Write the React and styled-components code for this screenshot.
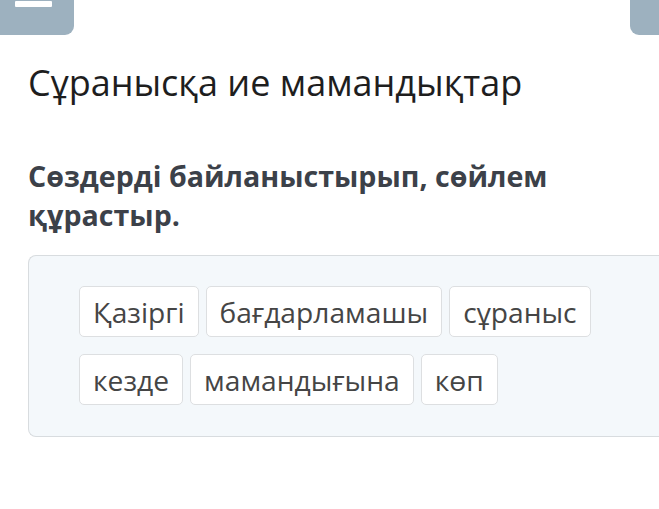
import styled, { createGlobalStyle } from 'styled-components';

const GlobalStyle = createGlobalStyle`
  html, body {
    margin: 0;
    padding: 0;
    background: #fff;
    font-family: "Open Sans", "Noto Sans", sans-serif;
    overflow: hidden;
  }
`;

const words = [
  ['Қазіргі', 'бағдарламашы', 'сұраныс'],
  ['кезде', 'мамандығына', 'көп'],
];

export default function App() {
  return (
    <Page>
      <GlobalStyle />
      <TopBar>
        <MenuButton>
          <MenuBar />
        </MenuButton>
        <SideButton />
      </TopBar>
      <Content>
        <Title>Сұранысқа ие мамандықтар</Title>
        <Question>Сөздерді байланыстырып, сөйлем құрастыр.</Question>
        <Board>
          {words.map((row, i) => (
            <Row key={i}>
              {row.map((w) => (
                <Chip key={w}>{w}</Chip>
              ))}
            </Row>
          ))}
        </Board>
      </Content>
    </Page>
  );
}

const Page = styled.div`
  width: 659px;
  height: 509px;
  overflow: hidden;
`;
const TopBar = styled.div`
  display: flex;
  justify-content: space-between;
  height: 35px;
`;
const MenuButton = styled.div`
  width: 74px;
  height: 35px;
  background: #9db1bf;
  border-bottom-right-radius: 9px;
  position: relative;
`;
const MenuBar = styled.span`
  position: absolute;
  left: 15px;
  top: 1px;
  width: 37px;
  height: 6px;
  background: #fff;
  border-radius: 1px;
`;
const SideButton = styled.div`
  width: 29px;
  height: 35px;
  background: #9db1bf;
  border-bottom-left-radius: 9px;
`;
const Content = styled.div`
  padding-left: 28px;
`;
const Title = styled.h1`
  margin: 24px 0 0;
  font-size: 36px;
  font-weight: 400;
  line-height: 48px;
  color: #1e1e1e;
  white-space: nowrap;
`;
const Question = styled.p`
  margin: 49px 0 0;
  width: 560px;
  font-size: 28.6px;
  font-weight: 700;
  line-height: 39px;
  color: #3c4149;
`;
const Board = styled.div`
  margin-top: 21px;
  width: 660px;
  height: 182px;
  box-sizing: border-box;
  padding: 30px 0 0 50px;
  background: #f4f8fb;
  border: 1.5px solid #d8dcdf;
  border-right: none;
  border-radius: 8px 0 0 8px;
  display: flex;
  flex-direction: column;
  gap: 17px;
`;
const Row = styled.div`
  display: flex;
  gap: 7px;
`;
const Chip = styled.div`
  height: 51px;
  box-sizing: border-box;
  padding: 0 13px;
  display: flex;
  align-items: center;
  background: #fff;
  border: 1.5px solid #dddfe1;
  border-radius: 5px;
  font-size: 28.2px;
  color: #454545;
`;
